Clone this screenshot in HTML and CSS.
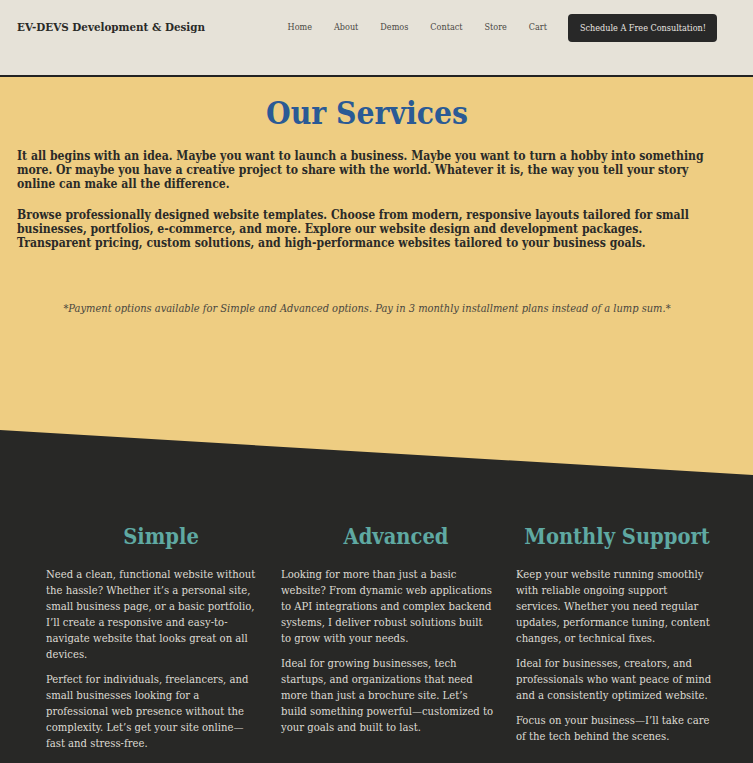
FILE: index.html
```html
<!DOCTYPE html>
<html lang="en">
<head>
<meta charset="utf-8">
<title>Our Services — EV-DEVS</title>
<link rel="stylesheet" href="styles.css">
</head>
<body>
<header class="site-header">
  <div class="logo">EV-DEVS Development &amp; Design</div>
  <nav class="nav">
    <a href="#">Home</a>
    <a href="#">About</a>
    <a href="#">Demos</a>
    <a href="#">Contact</a>
    <a href="#">Store</a>
    <a href="#">Cart</a>
    <a href="#" class="cta">Schedule A Free Consultation!</a>
  </nav>
</header>
<section class="intro">
  <h1 class="title">Our Services</h1>
  <p class="lead">It all begins with an idea. Maybe you want to launch a business. Maybe you want to turn a hobby into something more. Or maybe you have a creative project to share with the world. Whatever it is, the way you tell your story online can make all the difference.</p>
  <p class="lead">Browse professionally designed website templates. Choose from modern, responsive layouts tailored for small businesses, portfolios, e-commerce, and more. Explore our website design and development packages. Transparent pricing, custom solutions, and high-performance websites tailored to your business goals.</p>
  <p class="note">*Payment options available for Simple and Advanced options. Pay in 3 monthly installment plans instead of a lump sum.*</p>
</section>
<section class="services">
  <div class="col">
    <h2>Simple</h2>
    <p>Need a clean, functional website without the hassle? Whether it’s a personal site, small business page, or a basic portfolio, I’ll create a responsive and easy-to-navigate website that looks great on all devices.</p>
    <p>Perfect for individuals, freelancers, and small businesses looking for a professional web presence without the complexity. Let’s get your site online—fast and stress-free.</p>
  </div>
  <div class="col">
    <h2>Advanced</h2>
    <p>Looking for more than just a basic website? From dynamic web applications to API integrations and complex backend systems, I deliver robust solutions built to grow with your needs.</p>
    <p>Ideal for growing businesses, tech startups, and organizations that need more than just a brochure site. Let’s build something powerful—customized to your goals and built to last.</p>
  </div>
  <div class="col col-last">
    <h2>Monthly Support</h2>
    <p>Keep your website running smoothly with reliable ongoing support<br>services. Whether you need regular updates, performance tuning, content changes, or technical fixes.</p>
    <p>Ideal for businesses, creators, and professionals who want peace of mind and a consistently optimized website.</p>
    <p>Focus on your business—I’ll take care of the tech behind the scenes.</p>
  </div>
</section>
</body>
</html>
```
FILE: styles.css
```css
* { box-sizing: border-box; }
html, body { margin: 0; padding: 0; }
body {
  background: #282826;
  font-family: "DejaVu Serif", serif;
  overflow: hidden;
}
.site-header {
  height: 77px;
  background: #e6e2d8;
  border-bottom: 2px solid #222;
  display: flex;
  align-items: flex-start;
  justify-content: space-between;
  padding: 14px 36px 0 17px;
}
.logo {
  font-family: "DejaVu Serif Condensed", "DejaVu Serif", serif;
  font-weight: bold;
  font-size: 11.5px;
  color: #2a2a28;
  margin-top: 6px;
}
.nav {
  display: flex;
  align-items: center;
}
.nav a {
  font-family: "DejaVu Serif Condensed", "DejaVu Serif", serif;
  font-size: 9px;
  color: #4a4844;
  text-decoration: none;
  margin-left: 22px;
  position: relative;
  top: -1px;
}
.nav a:first-child { margin-left: 0; }
.nav a.cta {
  background: #282828;
  color: #e8e6e0;
  border-radius: 4px;
  height: 28px;
  padding: 0 11px 0 12px;
  display: flex;
  align-items: center;
  margin-left: 21px;
  top: 0;
}
.intro {
  background: #eecd82;
  padding: 16px 36px 160px 17px;
}
.title {
  font-family: "DejaVu Serif Condensed", "DejaVu Serif", serif;
  font-weight: bold;
  font-size: 31.5px;
  color: #2a5a95;
  text-align: center;
  margin: 0 0 16px;
  line-height: 40px;
}
.lead {
  font-family: "DejaVu Serif Condensed", "DejaVu Serif", serif;
  font-weight: bold;
  font-size: 12.1px;
  line-height: 14px;
  color: #2a2a28;
  margin: 0 4px 17px 0;
}
.note {
  font-family: "DejaVu Serif Condensed", "DejaVu Serif", serif;
  font-style: italic;
  font-size: 11px;
  color: #4a4740;
  text-align: center;
  margin: 52px 0 0;
}
.services {
  background: #282826;
  margin-top: -45px;
  clip-path: polygon(0 0, 100% 45px, 100% 100%, 0 100%);
  padding: 92px 7px 40px 46px;
  display: grid;
  grid-template-columns: repeat(3, 230px);
  column-gap: 5px;
}
.col { padding-right: 17px; }
.col h2 {
  font-family: "DejaVu Serif Condensed", "DejaVu Serif", serif;
  font-weight: bold;
  font-size: 21.7px;
  color: #5fa9a2;
  text-align: center;
  margin: 0 -17px 15px 0;
  line-height: 30px;
}
.col-last { padding-right: 30px; }
.col-last h2 { margin-right: -2px; }
.col p {
  font-family: "DejaVu Serif Condensed", "DejaVu Serif", serif;
  font-size: 11.2px;
  line-height: 16px;
  color: #dedbd3;
  margin: 0 0 9px;
}
```
